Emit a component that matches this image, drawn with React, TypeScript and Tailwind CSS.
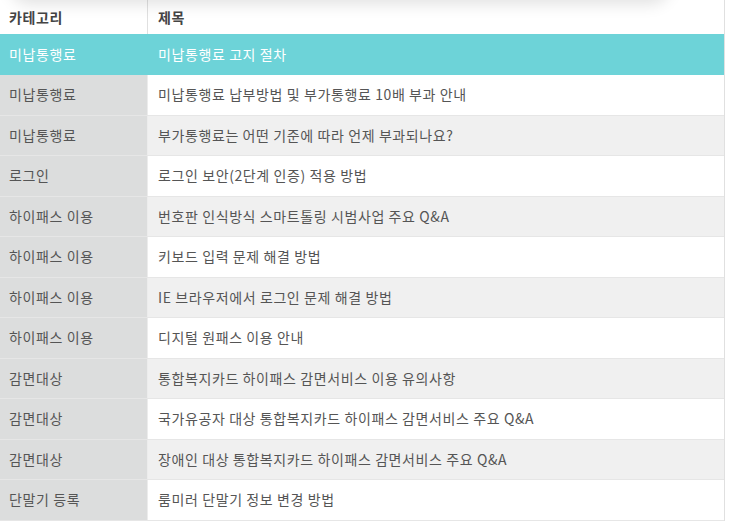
const rows: [string, string][] = [
  ['미납통행료', '미납통행료 고지 절차'],
  ['미납통행료', '미납통행료 납부방법 및 부가통행료 10배 부과 안내'],
  ['미납통행료', '부가통행료는 어떤 기준에 따라 언제 부과되나요?'],
  ['로그인', '로그인 보안(2단계 인증) 적용 방법'],
  ['하이패스 이용', '번호판 인식방식 스마트톨링 시범사업 주요 Q&A'],
  ['하이패스 이용', '키보드 입력 문제 해결 방법'],
  ['하이패스 이용', 'IE 브라우저에서 로그인 문제 해결 방법'],
  ['하이패스 이용', '디지털 원패스 이용 안내'],
  ['감면대상', '통합복지카드 하이패스 감면서비스 이용 유의사항'],
  ['감면대상', '국가유공자 대상 통합복지카드 하이패스 감면서비스 주요 Q&A'],
  ['감면대상', '장애인 대상 통합복지카드 하이패스 감면서비스 주요 Q&A'],
  ['단말기 등록', '룸미러 단말기 정보 변경 방법'],
]

export default function App() {
  return (
    <div
      className="relative h-[530px] w-[740px] overflow-hidden bg-white text-[14px] tracking-[0.6px] text-[#555]"
      style={{ fontFamily: '"Noto Sans CJK KR", "Noto Sans", sans-serif' }}
    >
      <div className="absolute -top-[40px] left-[10px] h-[40px] w-[660px] rounded-full shadow-[0_4px_16px_rgba(0,0,0,0.12)]" />
      <div className="w-[725px] border-r border-[#e0e0e0]">
        <div className="flex h-[34px] items-center font-bold text-[#444]">
          <div className="flex h-full w-[148px] items-center border-r border-[#e0e0e0] pl-[9px]">카테고리</div>
          <div className="pl-[10px]">제목</div>
        </div>
        {rows.map(([cat, title], i) => {
          const active = i === 0
          const alt = i % 2 === 1
          return (
            <div
              key={i}
              className={
                active
                  ? 'flex h-[41px] items-center bg-[#6dd3d8] text-white'
                  : 'flex h-[40.5px] border-b border-[#e6e6e6] items-stretch'
              }
            >
              <div
                className={
                  active
                    ? 'flex h-full w-[148px] items-center pl-[9px]'
                    : 'flex w-[148px] items-center border-r border-[#ececec] bg-[#dcdddd] pl-[9px]'
                }
              >
                {cat}
              </div>
              <div
                className={
                  active
                    ? 'flex flex-1 items-center pl-[10px]'
                    : alt
                      ? 'flex flex-1 items-center bg-white pl-[10px]'
                      : 'flex flex-1 items-center bg-[#f0f0f0] pl-[10px]'
                }
              >
                {title}
              </div>
            </div>
          )
        })}
      </div>
    </div>
  )
}
